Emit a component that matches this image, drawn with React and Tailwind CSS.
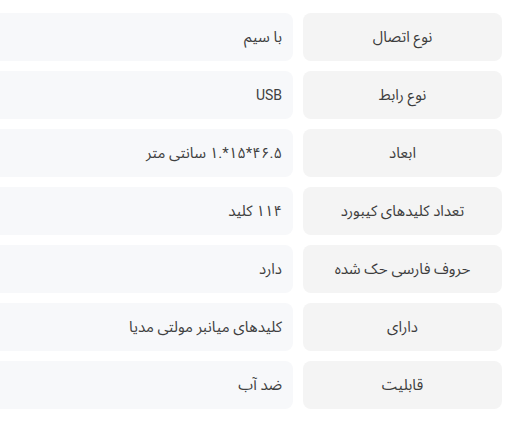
import React from 'react';

const specs = [
  { label: 'نوع اتصال', value: 'با سیم' },
  { label: 'نوع رابط', value: 'USB' },
  { label: 'ابعاد', value: '۴۶.۵*۱۵*.۱ سانتی متر' },
  { label: 'تعداد کلیدهای کیبورد', value: '۱۱۴ کلید' },
  { label: 'حروف فارسی حک شده', value: 'دارد' },
  { label: 'دارای', value: 'کلیدهای میانبر مولتی مدیا' },
  { label: 'قابلیت', value: 'ضد آب' },
];

const App = () => {
  return (
    <div
      dir="rtl"
      className="w-[525px] h-[423px] overflow-hidden bg-white pt-[13px] pr-[23px] flex flex-col gap-[10px] font-['Roboto','Noto_Sans_Arabic','DejaVu_Sans',sans-serif] text-[15px]"
    >
      {specs.map((item) => (
        <div key={item.label} className="flex gap-[10px] h-[48px]">
          <div className="w-[199px] shrink-0 rounded-lg bg-[#f4f4f4] flex items-center justify-center text-[#3d3d3d]">
            {item.label}
          </div>
          <div className="flex-1 -ml-[20px] rounded-lg bg-[#f7f8fa] flex items-center pr-[11px] text-[#404040]">
            <span className={item.value === 'USB' ? 'text-[14px]' : ''}>{item.value}</span>
          </div>
        </div>
      ))}
    </div>
  );
};

export default App;
